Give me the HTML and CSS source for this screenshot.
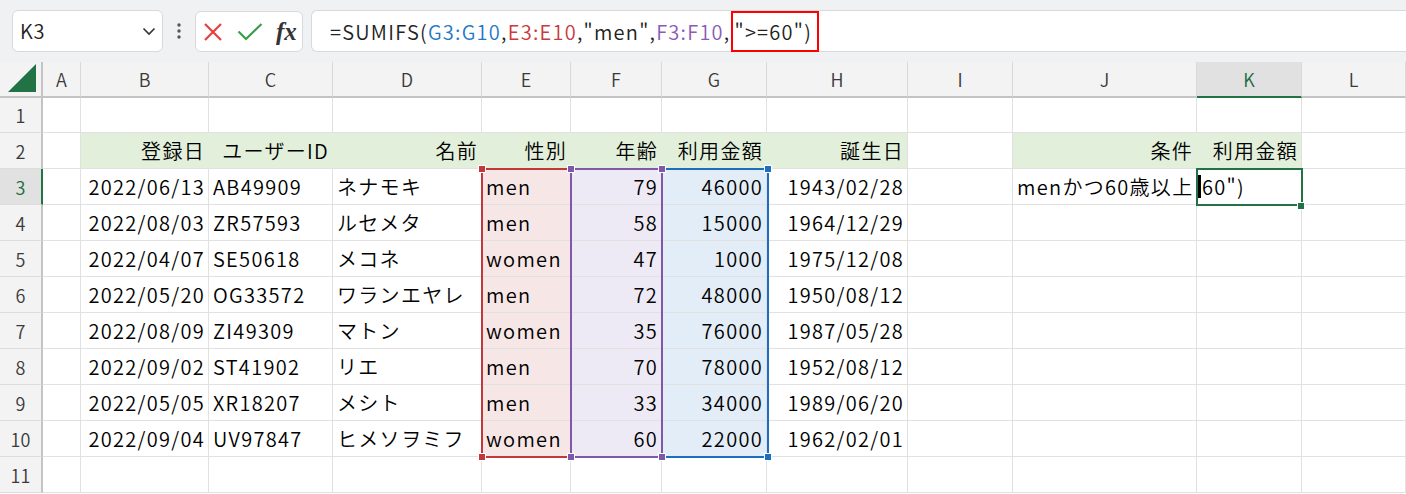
FILE: index.html
```html
<!DOCTYPE html>
<html lang="ja">
<head>
<meta charset="utf-8">
<title>SUMIFS</title>
<link rel="stylesheet" href="styles.css">
</head>
<body>
<div class="app">
  <div class="toolbar">
    <div class="namebox">
      <span class="nb-text">K3</span>
      <svg class="chev" width="14" height="10" viewBox="0 0 14 10"><path d="M1.5 2.5 L7 8 L12.5 2.5" fill="none" stroke="#333" stroke-width="1.6"/></svg>
    </div>
    <div class="grip">
      <svg width="6" height="18" viewBox="0 0 6 18"><circle cx="3" cy="3" r="1.7" fill="#555"/><circle cx="3" cy="9" r="1.7" fill="#555"/><circle cx="3" cy="15" r="1.7" fill="#555"/></svg>
    </div>
    <div class="fxbox">
      <svg class="ico-x" width="20" height="20" viewBox="0 0 20 20"><path d="M2 2 L18 18 M18 2 L2 18" stroke="#e5413f" stroke-width="2.2" fill="none"/></svg>
      <svg class="ico-ok" width="26" height="20" viewBox="0 0 26 20"><path d="M1.5 9.5 L9 17 L24.5 2" stroke="#3a9d4d" stroke-width="2.2" fill="none"/></svg>
      <span class="fx">fx</span>
    </div>
    <div class="formula">
      <span>=SUMIFS(</span><span class="fg">G3:G10</span><span>,</span><span class="fe">E3:E10</span><span>,"men",</span><span class="ff">F3:F10</span><span>,</span><span class="crit">"&gt;=60")</span>
    </div>
  </div>

  <div class="sheet">
    <div class="row hdr">
      <div class="c corner"><svg width="30" height="30" viewBox="0 0 30 30"><polygon points="28,1 28,29 0,29" fill="#217346"/></svg></div>
      <div class="c">A</div><div class="c">B</div><div class="c">C</div><div class="c">D</div><div class="c">E</div><div class="c">F</div><div class="c">G</div><div class="c">H</div><div class="c">I</div><div class="c">J</div><div class="c kh">K</div><div class="c">L</div>
    </div>
    <div class="row r1">
      <div class="c rh">1</div>
      <div class="c"></div><div class="c"></div><div class="c"></div><div class="c"></div><div class="c"></div><div class="c"></div><div class="c"></div><div class="c"></div><div class="c"></div><div class="c"></div><div class="c"></div><div class="c"></div>
    </div>
    <div class="row">
      <div class="c rh">2</div>
      <div class="c"></div>
      <div class="c g r">登録日</div><div class="c g r">ユーザーID</div><div class="c g r">名前</div><div class="c g r">性別</div><div class="c g r">年齢</div><div class="c g r">利用金額</div><div class="c g r gl">誕生日</div>
      <div class="c"></div>
      <div class="c g r">条件</div><div class="c g r gl">利用金額</div>
      <div class="c"></div>
    </div>
    <div class="row">
      <div class="c rh sel">3</div>
      <div class="c"></div>
      <div class="c r">2022/06/13</div><div class="c">AB49909</div><div class="c">ネナモキ</div><div class="c pe">men</div><div class="c pf r">79</div><div class="c pg r">46000</div><div class="c r">1943/02/28</div>
      <div class="c"></div>
      <div class="c">menかつ60歳以上</div><div class="c kc"><span class="caret"></span>60")</div>
      <div class="c"></div>
    </div>
    <div class="row">
      <div class="c rh">4</div>
      <div class="c"></div>
      <div class="c r">2022/08/03</div><div class="c">ZR57593</div><div class="c">ルセメタ</div><div class="c pe">men</div><div class="c pf r">58</div><div class="c pg r">15000</div><div class="c r">1964/12/29</div>
      <div class="c"></div><div class="c"></div><div class="c"></div><div class="c"></div>
    </div>
    <div class="row">
      <div class="c rh">5</div>
      <div class="c"></div>
      <div class="c r">2022/04/07</div><div class="c">SE50618</div><div class="c">メコネ</div><div class="c pe">women</div><div class="c pf r">47</div><div class="c pg r">1000</div><div class="c r">1975/12/08</div>
      <div class="c"></div><div class="c"></div><div class="c"></div><div class="c"></div>
    </div>
    <div class="row">
      <div class="c rh">6</div>
      <div class="c"></div>
      <div class="c r">2022/05/20</div><div class="c">OG33572</div><div class="c">ワランエヤレ</div><div class="c pe">men</div><div class="c pf r">72</div><div class="c pg r">48000</div><div class="c r">1950/08/12</div>
      <div class="c"></div><div class="c"></div><div class="c"></div><div class="c"></div>
    </div>
    <div class="row">
      <div class="c rh">7</div>
      <div class="c"></div>
      <div class="c r">2022/08/09</div><div class="c">ZI49309</div><div class="c">マトン</div><div class="c pe">women</div><div class="c pf r">35</div><div class="c pg r">76000</div><div class="c r">1987/05/28</div>
      <div class="c"></div><div class="c"></div><div class="c"></div><div class="c"></div>
    </div>
    <div class="row">
      <div class="c rh">8</div>
      <div class="c"></div>
      <div class="c r">2022/09/02</div><div class="c">ST41902</div><div class="c">リエ</div><div class="c pe">men</div><div class="c pf r">70</div><div class="c pg r">78000</div><div class="c r">1952/08/12</div>
      <div class="c"></div><div class="c"></div><div class="c"></div><div class="c"></div>
    </div>
    <div class="row">
      <div class="c rh">9</div>
      <div class="c"></div>
      <div class="c r">2022/05/05</div><div class="c">XR18207</div><div class="c">メシト</div><div class="c pe">men</div><div class="c pf r">33</div><div class="c pg r">34000</div><div class="c r">1989/06/20</div>
      <div class="c"></div><div class="c"></div><div class="c"></div><div class="c"></div>
    </div>
    <div class="row">
      <div class="c rh">10</div>
      <div class="c"></div>
      <div class="c r">2022/09/04</div><div class="c">UV97847</div><div class="c">ヒメソヲミフ</div><div class="c pe">women</div><div class="c pf r">60</div><div class="c pg r">22000</div><div class="c r">1962/02/01</div>
      <div class="c"></div><div class="c"></div><div class="c"></div><div class="c"></div>
    </div>
    <div class="row">
      <div class="c rh">11</div>
      <div class="c"></div><div class="c"></div><div class="c"></div><div class="c"></div><div class="c"></div><div class="c"></div><div class="c"></div><div class="c"></div><div class="c"></div><div class="c"></div><div class="c"></div><div class="c"></div>
    </div>

    <div class="rng rng-e"></div>
    <div class="rng rng-g"></div>
    <div class="rng rng-f"></div>
    <div class="hd hd-e hd-e1"></div>
    <div class="hd hd-e hd-e2"></div>
    <div class="hd hd-g hd-g1"></div>
    <div class="hd hd-g hd-g2"></div>
    <div class="hd hd-f hd-f1"></div>
    <div class="hd hd-f hd-f2"></div>
    <div class="hd hd-f hd-f3"></div>
    <div class="hd hd-f hd-f4"></div>
    <div class="selk"></div>
    <div class="fill-handle"></div>
  </div>
</div>
</body>
</html>
```

FILE: styles.css
```css
* { box-sizing: border-box; }

body {
  margin: 0;
  background: #ffffff;
  font-family: "Noto Sans CJK JP", sans-serif;
  font-weight: 350;
  color: #000;
}

.app {
  width: 1406px;
  height: 494px;
  overflow: hidden;
}

/* ---------- toolbar ---------- */
.toolbar {
  height: 62px;
  background: #f0f1f2;
  display: flex;
  align-items: flex-start;
  padding: 10px 0 0 12px;
}

.namebox {
  width: 151px;
  height: 42px;
  background: #fff;
  border: 1px solid #d9d9d9;
  border-radius: 6px;
  display: flex;
  align-items: center;
  justify-content: space-between;
  padding: 0 6px 0 7px;
  font-size: 20px;
  letter-spacing: 0.8px;
  color: #222;
}

.nb-text { line-height: 1; }

.grip {
  width: 32px;
  height: 42px;
  display: flex;
  align-items: center;
  justify-content: center;
}

.fxbox {
  width: 108px;
  height: 41px;
  margin-top: 1px;
  background: #fff;
  border: 1px solid #d9d9d9;
  border-radius: 6px;
  display: flex;
  align-items: center;
  padding: 0 0 0 7px;
}

.ico-x { margin-right: 14px; }
.ico-ok { margin-right: 13px; }

.fx {
  font-family: "Liberation Serif", "DejaVu Serif", serif;
  font-style: italic;
  font-weight: bold;
  font-size: 25px;
  line-height: 1;
  color: #333;
}

.formula {
  flex: 1;
  margin-left: 8px;
  height: 42px;
  background: #fff;
  border: 1px solid #d9d9d9;
  border-right: none;
  border-radius: 6px 0 0 6px;
  display: flex;
  align-items: center;
  padding-left: 18px;
  font-size: 20px;
  letter-spacing: 1.25px;
  color: #222;
  white-space: pre;
}

.fg { color: #1f78c8; }
.fe { color: #c83a3e; }
.ff { color: #8a5bb8; }

.crit {
  height: 41px;
  display: flex;
  align-items: center;
  border: 2px solid #ff0000;
  padding: 0 5px 0 2px;
  margin-left: 0;
}

/* ---------- sheet ---------- */
.sheet {
  position: relative;
}

.row {
  display: grid;
  grid-template-columns: 43px 38px 128px 124px 149px 89px 91px 105px 141px 105px 184px 105px 1fr;
  height: 36px;
}

.row.r1 { height: 35px; }

.c {
  border-right: 1px solid #e1e1e1;
  border-bottom: 1px solid #e1e1e1;
  padding: 0 4px;
  display: flex;
  align-items: center;
  font-size: 20px;
  letter-spacing: 1.3px;
  white-space: nowrap;
  line-height: 1;
}

.c.r { justify-content: flex-end; padding-right: 3px; }

.hdr .c {
  background: #f3f3f3;
  border-bottom: 2px solid #c4c4c4;
  border-right-color: #d9d9d9;
  justify-content: center;
  font-size: 18px;
  color: #3a3a3a;
  letter-spacing: 0;
}

.hdr .corner {
  border-right: 2px solid #c4c4c4;
  justify-content: flex-end;
  align-items: flex-end;
  padding: 0 3px 3px 0;
}

.hdr .kh {
  background: #e1e1e1;
  border-bottom-color: #217346;
  color: #1d6b40;
}

.rh {
  background: #f3f3f3;
  border-right: 2px solid #c4c4c4;
  border-bottom-color: #dcdcdc;
  justify-content: center;
  font-size: 18px;
  color: #3a3a3a;
  letter-spacing: 0;
}

.rh.sel {
  background: #e1e1e1;
  border-right-color: #217346;
  color: #1d6b40;
}

.g {
  background: #e2efda;
  border-right-color: #e2efda;
}
.g.gl { border-right-color: #e1e1e1; }

.pe { background: #f7e6e6; }
.pf { background: #eeeaf5; }
.pg { background: #e2edf7; }

.kc { padding-left: 1px; }

.caret {
  display: inline-block;
  width: 3px;
  height: 23px;
  background: #000;
  margin-right: 1px;
}

/* overlays: formula range highlights */
.rng {
  position: absolute;
  top: 106px;
  height: 290px;
  border: 2px solid;
}
.rng-e { left: 481px; width: 91px; border-color: #c0393b; }
.rng-f { left: 570px; width: 93px; border-color: #7e59a9; }
.rng-g { left: 661px; width: 108px; border-color: #1d6ec0; }

.hd {
  position: absolute;
  width: 8px;
  height: 8px;
  border: 1px solid #fff;
}
.hd-e { background: #c0393b; }
.hd-f { background: #7e59a9; }
.hd-g { background: #1d6ec0; }

.hd-e1 { left: 478px; top: 103px; }
.hd-e2 { left: 478px; top: 391px; }
.hd-f1 { left: 567px; top: 103px; }
.hd-f2 { left: 658px; top: 103px; }
.hd-f3 { left: 567px; top: 391px; }
.hd-f4 { left: 658px; top: 391px; }
.hd-g1 { left: 764px; top: 103px; }
.hd-g2 { left: 764px; top: 391px; }

.selk {
  position: absolute;
  left: 1196px;
  top: 106px;
  width: 107px;
  height: 38px;
  border: 2px solid #217346;
}

.fill-handle {
  position: absolute;
  left: 1297px;
  top: 140px;
  width: 8px;
  height: 8px;
  background: #217346;
  border: 1px solid #fff;
}
```
